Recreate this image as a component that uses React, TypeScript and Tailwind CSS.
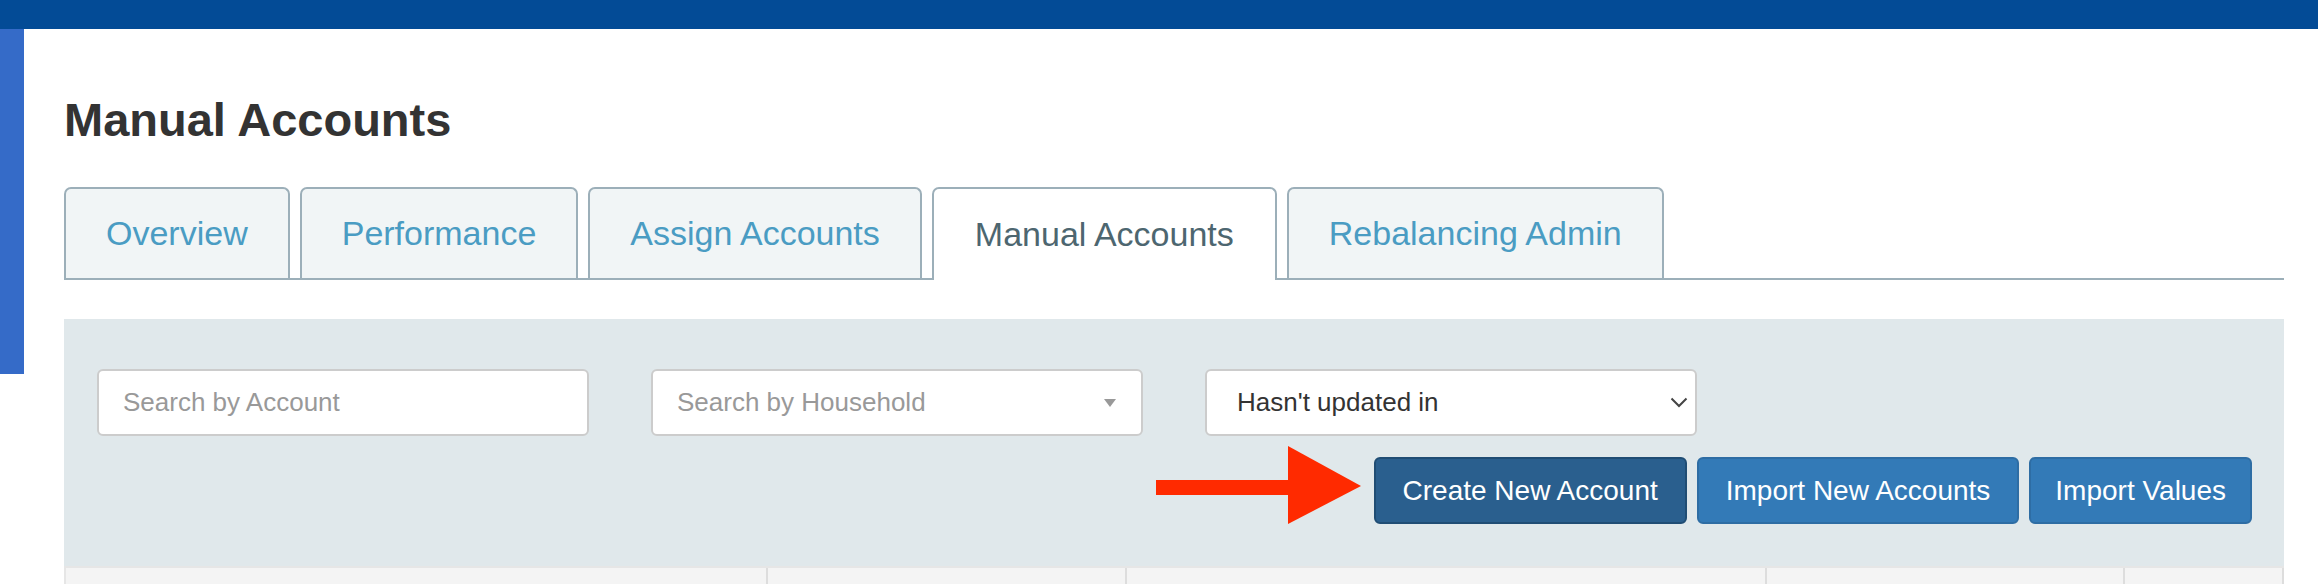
type Tab = { label: string; active?: boolean };

const tabs: Tab[] = [
  { label: "Overview" },
  { label: "Performance" },
  { label: "Assign Accounts" },
  { label: "Manual Accounts", active: true },
  { label: "Rebalancing Admin" },
];

const columns = ["w-[702px]", "w-[359px]", "w-[640px]", "w-[358px]", "flex-1"];

const TabBar = () => (
  <div className="flex gap-[10px] border-b-2 border-[#9cafb9]">
    {tabs.map((tab) =>
      tab.active ? (
        <div
          key={tab.label}
          className="-mb-[2px] flex h-[93px] items-center rounded-t-[7px] border-2 border-b-0 border-[#9cafb9] bg-white px-[41px] text-[34px] text-[#4d6670]"
        >
          {tab.label}
        </div>
      ) : (
        <div
          key={tab.label}
          className="flex h-[91px] items-center rounded-t-[7px] border-2 border-b-0 border-[#9cafb9] bg-[#f1f5f6] px-[40px] text-[34px] text-[#4a9cc3]"
        >
          {tab.label}
        </div>
      )
    )}
  </div>
);

const Arrow = () => (
  <svg
    className="absolute left-[1086px] top-[121px]"
    width="220"
    height="90"
    viewBox="0 0 220 90"
  >
    <rect x="6" y="40" width="134" height="15" fill="#ff2a00" />
    <polygon points="138,6 211,46 138,84" fill="#ff2a00" />
  </svg>
);

export default function App() {
  return (
    <div className="relative h-[584px] w-[2318px] overflow-hidden bg-white font-['Liberation_Sans',Arial,sans-serif]">
      <div className="h-[29px] bg-[#034b96]" />
      <div className="flex">
        <div className="h-[345px] w-[24px] shrink-0 bg-[#356bc8]" />
        <div className="ml-[40px] w-[2220px]">
          <h1 className="mt-[64px] text-[47px] font-bold leading-[54px] text-[#333333]">
            Manual Accounts
          </h1>

          <div className="mt-[40px]">
            <TabBar />
          </div>

          <div className="relative mt-[39px] h-[247px] bg-[#e0e8eb] pl-[33px] pr-[32px] pt-[50px]">
            <div className="flex gap-[62px]">
              <div className="flex h-[67px] w-[492px] items-center rounded-[6px] border-2 border-[#cccccc] bg-white pl-[24px] text-[26px] text-[#999999]">
                Search by Account
              </div>
              <div className="flex h-[67px] w-[492px] items-center justify-between rounded-[6px] border-2 border-[#cccccc] bg-white pl-[24px] pr-[25px] text-[26px] text-[#999999]">
                <span>Search by Household</span>
                <span className="h-0 w-0 border-x-[6px] border-t-[8px] border-x-transparent border-t-[#999999]" />
              </div>
              <div className="flex h-[67px] w-[492px] items-center justify-between rounded-[6px] border-2 border-[#cccccc] bg-white pl-[30px] pr-[6px] text-[26px] text-[#333333]">
                <span>Hasn&apos;t updated in</span>
                <svg width="18" height="11" viewBox="0 0 18 11" className="mr-[1px]">
                  <path d="M1.5 1.5 L9 9 L16.5 1.5" fill="none" stroke="#444" strokeWidth="2" />
                </svg>
              </div>
            </div>

            <div className="mt-[21px] flex justify-end gap-[10px]">
              <button className="h-[67px] rounded-[6px] border-2 border-[#204d74] bg-[#2a5f8e] px-[27px] text-[28px] text-white">
                Create New Account
              </button>
              <button className="h-[67px] rounded-[6px] border-2 border-[#2e6da4] bg-[#337ab7] px-[27px] text-[28px] text-white">
                Import New Accounts
              </button>
              <button className="h-[67px] rounded-[6px] border-2 border-[#2e6da4] bg-[#337ab7] px-[24px] text-[28px] text-white">
                Import Values
              </button>
            </div>

            <Arrow />
          </div>

          <div className="flex h-[30px] border-l-2 border-t-2 border-[#e6e6e6] bg-[#f4f4f4]">
            {columns.map((c, i) => (
              <div key={i} className={`${c} border-r-2 border-[#dddddd]`} />
            ))}
          </div>
        </div>
      </div>
    </div>
  );
}
